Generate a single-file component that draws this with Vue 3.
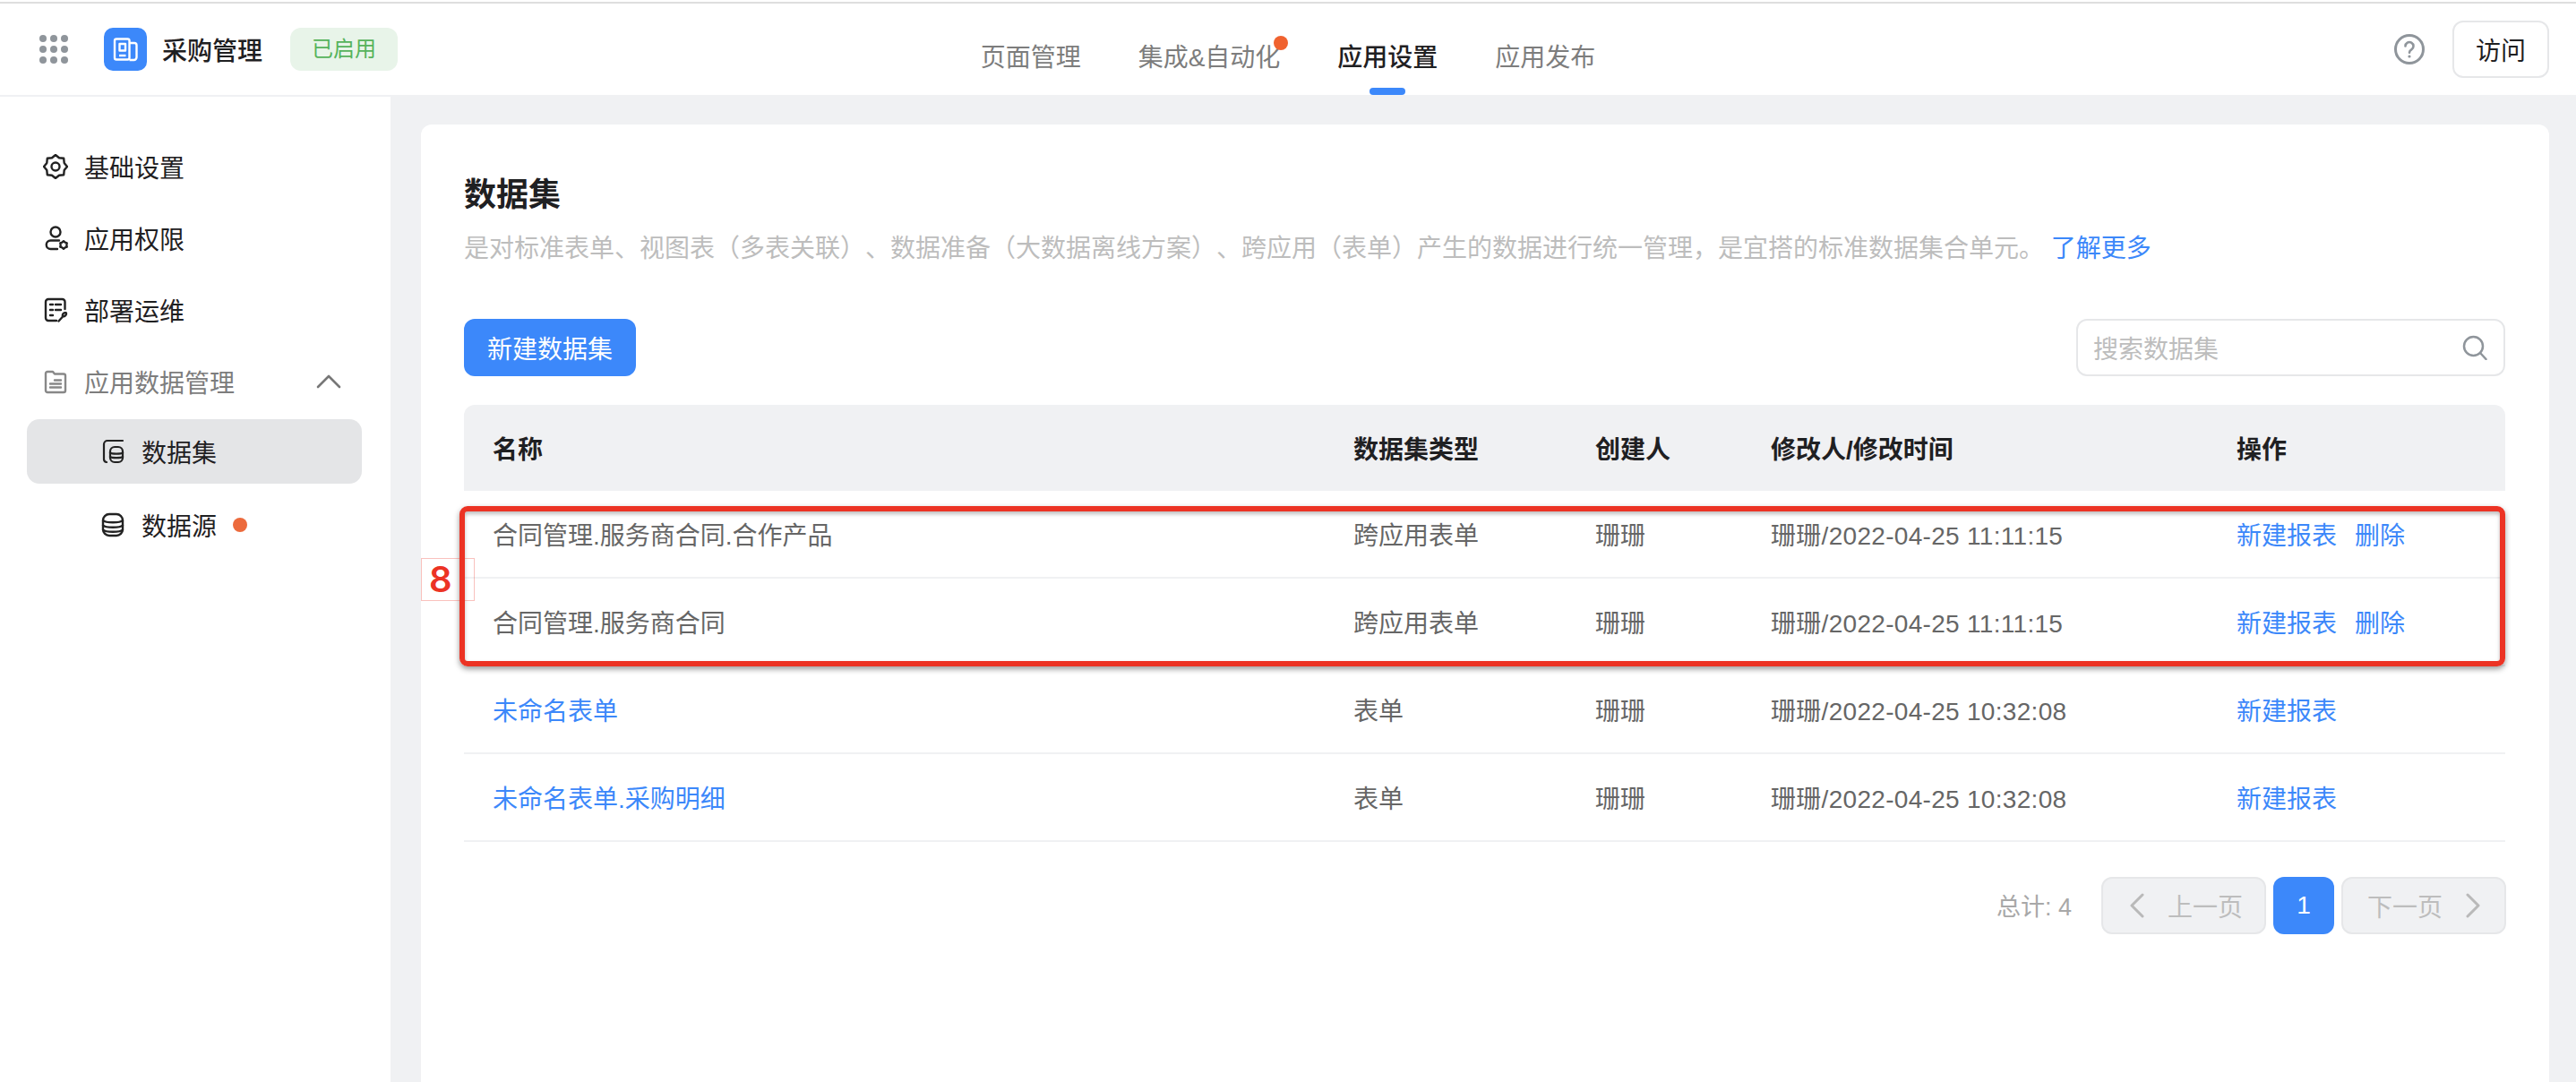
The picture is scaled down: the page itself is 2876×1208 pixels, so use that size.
<script setup>
const tabs = [
  { name: '页面管理' },
  { name: '集成&自动化', dot: true },
  { name: '应用设置', active: true },
  { name: '应用发布' }
]

const rows = [
  { name: '合同管理.服务商合同.合作产品', type: '跨应用表单', time: '2022-04-25 11:11:15', del: true },
  { name: '合同管理.服务商合同', type: '跨应用表单', time: '2022-04-25 11:11:15', del: true },
  { name: '未命名表单', type: '表单', time: '2022-04-25 10:32:08', link: true },
  { name: '未命名表单.采购明细', type: '表单', time: '2022-04-25 10:32:08', link: true }
]

// rounded cog outline, used by the settings and permission icons
const gear = (cx, cy, outer, inner, n) => {
  const pts = []
  for (let i = 0; i < n * 2; i++) {
    const r = i % 2 ? inner : outer
    const a = (Math.PI * i) / n - Math.PI / 2
    pts.push((cx + r * Math.cos(a)).toFixed(2) + ' ' + (cy + r * Math.sin(a)).toFixed(2))
  }
  return 'M' + pts.join('L') + 'Z'
}
</script>

<template>
  <div class="page">
    <header class="top">
      <div class="brand">
        <div class="dots"><i v-for="n in 9" :key="n"></i></div>
        <div class="logo">
          <svg width="48" height="48" viewBox="0 0 48 48" fill="none" stroke="#fff" stroke-width="2.4" stroke-linejoin="round">
            <rect x="12" y="12.5" width="16.5" height="23" rx="2" />
            <path d="M28.5 17H34a2.5 2.5 0 0 1 2.5 2.5v13.500a3 3 0 0 1-3 3h-5" />
            <rect x="17.500" y="18" width="6.500" height="7.500" />
            <path d="M17 31h7.500" />
          </svg>
        </div>
        <span class="app-name">采购管理</span>
        <span class="badge">已启用</span>
      </div>
      <nav class="tabs">
        <div v-for="t in tabs" :key="t.name" class="tab" :class="{ active: t.active }">
          {{ t.name }}
          <i v-if="t.dot" class="tab-dot"></i>
        </div>
      </nav>
      <div class="top-right">
        <svg width="36" height="36" viewBox="0 0 36 36" fill="none" stroke="#8f959b" stroke-width="3" stroke-linecap="round">
          <circle cx="18" cy="18" r="15.500" />
          <path d="M13.500 14.500a4.500 4.500 0 1 1 6.800 3.900c-1.500.9-2.300 1.800-2.300 3.300" stroke-width="2.600" />
          <circle cx="18" cy="26" r="1.600" fill="#8f959b" stroke="none" />
        </svg>
        <button class="visit">访问</button>
      </div>
    </header>

    <div class="body">
      <aside class="side">
        <div class="menu-item">
          <svg class="ico" viewBox="0 0 28 28" fill="none" stroke="#222" stroke-width="2.400" stroke-linejoin="round">
            <path :d="gear(14, 14, 13, 10.500, 8)" />
            <circle cx="14" cy="14" r="4.500" />
          </svg>
          <span>基础设置</span>
        </div>
        <div class="menu-item">
          <svg class="ico" viewBox="0 0 28 28" fill="none" stroke="#222" stroke-width="2.400" stroke-linecap="round" stroke-linejoin="round">
            <circle cx="14" cy="7" r="5.500" />
            <path d="M18 16.500H8.500a4.700 4.700 0 0 0 0 9.500H16" />
            <path :d="gear(23, 21.500, 4.300, 3.300, 6)" />
          </svg>
          <span>应用权限</span>
        </div>
        <div class="menu-item">
          <svg class="ico" viewBox="0 0 28 28" fill="none" stroke="#222" stroke-width="2.400" stroke-linecap="round" stroke-linejoin="round">
            <path d="M24.500 13V5a3 3 0 0 0-3-3H6a3 3 0 0 0-3 3v18a3 3 0 0 0 3 3h9" />
            <path d="M8 8h3M14 8h6M8 14h3M14 14h6M8 20h3" />
            <path d="M17.500 26.500l5-5.500M22 21a3 3 0 0 1 3.600-3.800M22 21a3 3 0 0 0 4-3" />
          </svg>
          <span>部署运维</span>
        </div>
        <div class="menu-item group">
          <svg class="ico" viewBox="0 0 28 28" fill="none" stroke="#888" stroke-width="2.400" stroke-linecap="round" stroke-linejoin="round">
            <path d="M3 5a2 2 0 0 1 2-2h6l2 2.500h10a2 2 0 0 1 2 2V24a2 2 0 0 1-2 2H5a2 2 0 0 1-2-2z" />
            <path d="M13 12.500h7M8 16.500h12M8 20.500h12" />
          </svg>
          <span>应用数据管理</span>
          <svg class="caret" width="28" height="16" viewBox="0 0 28 16" fill="none" stroke="#777" stroke-width="2.600" stroke-linecap="round" stroke-linejoin="round">
            <path d="M2 14L14 2l12 12" />
          </svg>
        </div>
        <div class="sub">
          <div class="menu-item sub-item current">
            <svg class="ico" viewBox="0 0 28 28" fill="none" stroke="#222" stroke-width="2.200" stroke-linecap="round" stroke-linejoin="round">
              <path d="M25 2H8a4 4 0 0 0-4 4v17a3.500 3.500 0 0 0 3 3" />
              <rect x="11" y="9" width="14" height="17" rx="5" />
              <path d="M11 15.500c2 1.500 12 1.500 14 0M11 20c2 1.500 12 1.500 14 0" />
            </svg>
            <span>数据集</span>
          </div>
          <div class="menu-item sub-item">
            <svg class="ico" viewBox="0 0 28 28" fill="none" stroke="#222" stroke-width="2.400" stroke-linecap="round" stroke-linejoin="round">
              <rect x="3" y="2" width="22" height="24" rx="7" />
              <path d="M3 9c3 3 19 3 22 0M3 14.500c3 3 19 3 22 0M3 19.500c3 3 19 3 22 0" />
            </svg>
            <span>数据源</span>
            <i class="side-dot"></i>
          </div>
        </div>
      </aside>

      <main class="main">
        <section class="card">
          <h1 class="title">数据集</h1>
          <p class="desc">
            是对标准表单、视图表（多表关联）、数据准备（大数据离线方案）、跨应用（表单）产生的数据进行统一管理，是宜搭的标准数据集合单元。
            <a class="more">了解更多</a>
          </p>

          <div class="toolbar">
            <button class="primary">新建数据集</button>
            <div class="search">
              <span>搜索数据集</span>
              <svg width="28" height="28" viewBox="0 0 28 28" fill="none" stroke="#8f959b" stroke-width="2.500" stroke-linecap="round">
                <circle cx="12.500" cy="12.500" r="10.500" />
                <path d="M20.500 20.500l6 6.500" />
              </svg>
            </div>
          </div>

          <div class="table">
            <div class="tr head">
              <div>名称</div>
              <div>数据集类型</div>
              <div>创建人</div>
              <div>修改人/修改时间</div>
              <div>操作</div>
            </div>
            <div v-for="r in rows" :key="r.name" class="tr">
              <div :class="{ link: r.link }">{{ r.name }}</div>
              <div>{{ r.type }}</div>
              <div>珊珊</div>
              <div class="when">珊珊/{{ r.time }}</div>
              <div class="ops">
                <a>新建报表</a>
                <a v-if="r.del">删除</a>
              </div>
            </div>
            <div class="mark"></div>
            <div class="mark-no">8</div>
          </div>

          <div class="pager">
            <span class="total">总计: 4</span>
            <div class="pg-btn prev">
              <svg width="16" height="28" viewBox="0 0 16 28" fill="none" stroke="#b9b9b9" stroke-width="3" stroke-linecap="round" stroke-linejoin="round">
                <path d="M14 2L2 14l12 12" />
              </svg>
              <span>上一页</span>
            </div>
            <div class="pg-num">1</div>
            <div class="pg-btn">
              <span>下一页</span>
              <svg width="16" height="28" viewBox="0 0 16 28" fill="none" stroke="#b9b9b9" stroke-width="3" stroke-linecap="round" stroke-linejoin="round">
                <path d="M2 2l12 12L2 26" />
              </svg>
            </div>
          </div>
        </section>
      </main>
    </div>
  </div>
</template>

<style>
html,
body {
  margin: 0;
  background: #fff;
}
</style>

<style scoped>
.page {
  width: 2876px;
  height: 1208px;
  overflow: hidden;
  padding-top: 2px;
  box-sizing: border-box;
  display: flex;
  flex-direction: column;
  font-family: "Liberation Sans", "Noto Sans CJK SC", sans-serif;
  font-size: 28px;
  color: #1f2022;
  background: #fff;
}

.top {
  height: 102px;
  flex: none;
  border-top: 2px solid #dedede;
  display: grid;
  grid-template-columns: 1fr auto 1fr;
  align-items: center;
  padding: 0 30px;
}
.brand {
  display: flex;
  align-items: center;
  padding-left: 14px;
}
.dots {
  width: 32px;
  display: grid;
  grid-template-columns: repeat(3, 8px);
  gap: 4px;
  margin-right: 40px;
}
.dots i {
  width: 8px;
  height: 8px;
  border-radius: 50%;
  background: #8f959b;
}
.logo {
  width: 48px;
  height: 48px;
  border-radius: 10px;
  background: #3c88fa;
  margin-right: 17px;
}
.logo svg {
  display: block;
}
.app-name {
  font-weight: 500;
  margin-right: 31px;
}
.badge {
  width: 120px;
  height: 48px;
  line-height: 48px;
  border-radius: 12px;
  background: #e8f4e9;
  color: #56b35c;
  font-size: 24px;
  text-align: center;
}

.tabs {
  display: flex;
  gap: 64px;
}
.tab {
  position: relative;
  height: 102px;
  box-sizing: border-box;
  padding-top: 14px;
  display: flex;
  align-items: center;
  color: #7d7d7d;
}
.tab.active {
  color: #1f2022;
  font-weight: 500;
}
.tab.active::after {
  content: "";
  position: absolute;
  left: 36px;
  bottom: 0;
  width: 40px;
  height: 8px;
  border-radius: 4px;
  background: #3c88fa;
}
.tab-dot {
  position: absolute;
  right: -9px;
  top: 36px;
  width: 16px;
  height: 16px;
  border-radius: 50%;
  background: #f0622f;
}
.top-right {
  display: flex;
  justify-content: flex-end;
  align-items: center;
  gap: 30px;
}
.visit {
  width: 108px;
  height: 64px;
  border: 2px solid #e6e7e9;
  border-radius: 12px;
  background: #fff;
  color: #1f2022;
  font: inherit;
  padding: 0;
}

.body {
  flex: 1;
  display: flex;
  min-height: 0;
  border-top: 2px solid #f0f1f3;
  background: #f0f1f3;
}
.side {
  width: 436px;
  flex: none;
  box-sizing: border-box;
  background: #fff;
  padding-top: 42px;
  display: flex;
  flex-direction: column;
  gap: 8px;
}
.menu-item {
  height: 72px;
  display: flex;
  align-items: center;
  gap: 18px;
  padding: 0 55px 0 48px;
}
.ico {
  width: 28px;
  height: 28px;
  flex: none;
}
.group {
  color: #7d7d7d;
}
.caret {
  margin-left: auto;
}
.sub {
  margin-top: -2px;
  display: flex;
  flex-direction: column;
  gap: 10px;
}
.sub-item {
  width: 374px;
  box-sizing: border-box;
  margin-left: 30px;
  padding-left: 82px;
  border-radius: 14px;
}
.current {
  background: #e4e5e7;
}
.side-dot {
  width: 16px;
  height: 16px;
  border-radius: 50%;
  background: #ec6a3c;
}

.main {
  flex: 1;
  min-width: 0;
  padding: 31px 30px 0 34px;
}
.card {
  height: 1200px;
  box-sizing: border-box;
  background: #fff;
  border-radius: 12px;
  padding: 57px 49px 0 48px;
}
.title {
  margin: 0;
  font-size: 36px;
  line-height: 44px;
  font-weight: 700;
}
.desc {
  margin: 18px 0 0;
  line-height: 40px;
  color: #bdbdbd;
  white-space: nowrap;
  text-spacing-trim: space-all;
}
.more {
  color: #3c88fa;
}
.toolbar {
  margin-top: 58px;
  display: flex;
  justify-content: space-between;
}
.primary {
  width: 192px;
  height: 64px;
  border: 0;
  border-radius: 12px;
  background: #3c88fa;
  color: #fff;
  font: inherit;
  padding: 0;
}
.search {
  width: 479px;
  height: 64px;
  box-sizing: border-box;
  border: 2px solid #e6e7e9;
  border-radius: 12px;
  display: flex;
  align-items: center;
  justify-content: space-between;
  padding: 0 18px 0 17px;
  color: #bdbdbd;
}

.table {
  position: relative;
  margin-top: 32px;
}
.tr {
  display: grid;
  grid-template-columns: 961px 270px 196px 520px 1fr;
  height: 98px;
  box-sizing: border-box;
  border-bottom: 2px solid #f0f1f3;
  align-items: center;
  color: #666;
}
.tr > div {
  padding-left: 32px;
}
.tr.head {
  height: 96px;
  border-bottom: 0;
  background: #f0f1f3;
  border-radius: 12px 12px 0 0;
  color: #1f2022;
  font-weight: 700;
}
.when {
  letter-spacing: 0.3px;
}
.tr.head .when {
  letter-spacing: 0;
}
.link,
.ops a {
  color: #3c88fa;
}
.ops {
  display: flex;
  gap: 20px;
}
.mark {
  position: absolute;
  left: -5px;
  right: 0;
  top: 113px;
  height: 179px;
  box-sizing: border-box;
  border: 6px solid #ec3324;
  border-radius: 9px;
  box-shadow: 0 3px 6px rgba(0, 0, 0, 0.4), inset 0 3px 4px rgba(0, 0, 0, 0.25);
}
.mark-no {
  position: absolute;
  left: -48px;
  top: 171px;
  width: 60px;
  height: 48px;
  box-sizing: border-box;
  border: 1px solid rgba(236, 51, 36, 0.3);
  padding-left: 8px;
  line-height: 46px;
  font-family: Inter, sans-serif;
  font-size: 40px;
  font-weight: 600;
  color: #ec3324;
}

.pager {
  margin-top: 39px;
  margin-right: -1px;
  display: flex;
  justify-content: flex-end;
  align-items: center;
  gap: 8px;
}
.total {
  color: #a8a8a8;
  font-size: 27px;
  margin-right: 25px;
  margin-top: -2px;
}
.pg-btn {
  width: 184px;
  height: 64px;
  box-sizing: border-box;
  border: 2px solid #e6e7e9;
  border-radius: 12px;
  background: #f0f1f3;
  color: #bdbdbd;
  display: flex;
  align-items: center;
  justify-content: center;
  gap: 26px;
}
.pg-btn.prev {
  padding-left: 6px;
}
.pg-num {
  width: 68px;
  height: 64px;
  line-height: 64px;
  border-radius: 12px;
  background: #3c88fa;
  color: #fff;
  text-align: center;
}
</style>
